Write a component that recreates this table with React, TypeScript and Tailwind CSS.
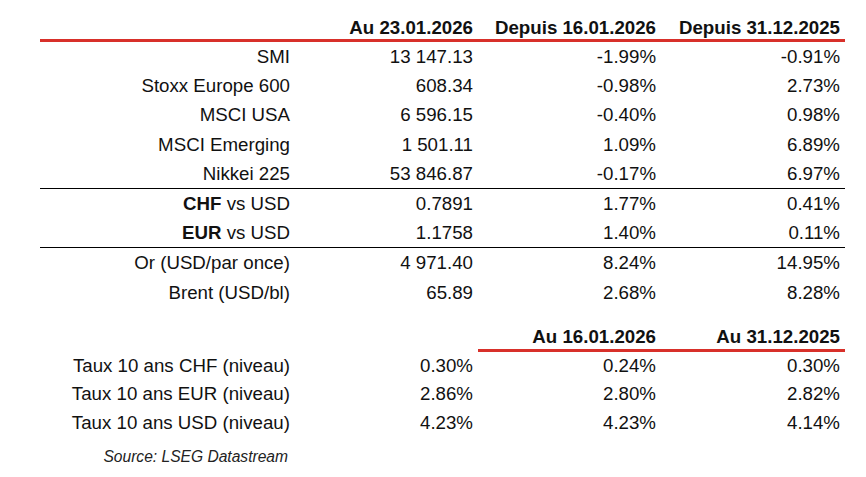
import React from "react";

type Row = { label: React.ReactNode; a: string; b: string; c: string };

const indices: Row[] = [
  { label: "SMI", a: "13 147.13", b: "-1.99%", c: "-0.91%" },
  { label: "Stoxx Europe 600", a: "608.34", b: "-0.98%", c: "2.73%" },
  { label: "MSCI USA", a: "6 596.15", b: "-0.40%", c: "0.98%" },
  { label: "MSCI Emerging", a: "1 501.11", b: "1.09%", c: "6.89%" },
  { label: "Nikkei 225", a: "53 846.87", b: "-0.17%", c: "6.97%" },
];

const fx: Row[] = [
  {
    label: (
      <>
        <span className="font-bold">CHF</span> vs USD
      </>
    ),
    a: "0.7891",
    b: "1.77%",
    c: "0.41%",
  },
  {
    label: (
      <>
        <span className="font-bold">EUR</span> vs USD
      </>
    ),
    a: "1.1758",
    b: "1.40%",
    c: "0.11%",
  },
];

const commodities: Row[] = [
  { label: "Or (USD/par once)", a: "4 971.40", b: "8.24%", c: "14.95%" },
  { label: "Brent (USD/bl)", a: "65.89", b: "2.68%", c: "8.28%" },
];

const rates: Row[] = [
  { label: "Taux 10 ans CHF (niveau)", a: "0.30%", b: "0.24%", c: "0.30%" },
  { label: "Taux 10 ans EUR (niveau)", a: "2.86%", b: "2.80%", c: "2.82%" },
  { label: "Taux 10 ans USD (niveau)", a: "4.23%", b: "4.23%", c: "4.14%" },
];

function DataRow({ row, h }: { row: Row; h: string }) {
  return (
    <div className={`flex pr-[5px] text-right ${h}`}>
      <div className="w-[250px]">{row.label}</div>
      <div className="w-[183px]">{row.a}</div>
      <div className="w-[183px]">{row.b}</div>
      <div className="w-[184px]">{row.c}</div>
    </div>
  );
}

export default function App() {
  return (
    <div
      className="h-[477px] w-[866px] bg-white pt-[14px] text-[18.7px] text-[#111]"
      style={{ fontFamily: '"Liberation Sans", Arial, sans-serif' }}
    >
      <div className="ml-[40px] w-[805px]">
        <div className="flex h-[28px] border-b-[3px] border-[#d8302a] pr-[5px] text-right font-bold leading-[27px]">
          <div className="w-[250px]" />
          <div className="w-[183px]">Au 23.01.2026</div>
          <div className="w-[183px]">Depuis 16.01.2026</div>
          <div className="w-[184px]">Depuis 31.12.2025</div>
        </div>

        <div className="border-b border-black">
          {indices.map((r, i) => (
            <DataRow key={i} row={r} h="h-[29.2px] leading-[29.2px]" />
          ))}
        </div>
        <div className="border-b border-black">
          {fx.map((r, i) => (
            <DataRow key={i} row={r} h="h-[29.2px] leading-[29.2px]" />
          ))}
        </div>
        <div>
          {commodities.map((r, i) => (
            <DataRow key={i} row={r} h="h-[29.2px] leading-[29.2px]" />
          ))}
        </div>

        <div className="mt-[17px] ml-[438px] flex h-[28px] border-b-[3px] border-[#d8302a] pr-[5px] text-right font-bold leading-[26px]">
          <div className="w-[178px]">Au 16.01.2026</div>
          <div className="w-[184px]">Au 31.12.2025</div>
        </div>

        <div>
          {rates.map((r, i) => (
            <DataRow key={i} row={r} h="h-[28.5px] leading-[28.5px]" />
          ))}
        </div>

        <div className="mt-[6px] flex h-[28px] leading-[28px]">
          <div className="w-[250px] pr-[2px] text-right text-[15.6px] italic text-[#222]">
            Source: LSEG Datastream
          </div>
        </div>
      </div>
    </div>
  );
}
